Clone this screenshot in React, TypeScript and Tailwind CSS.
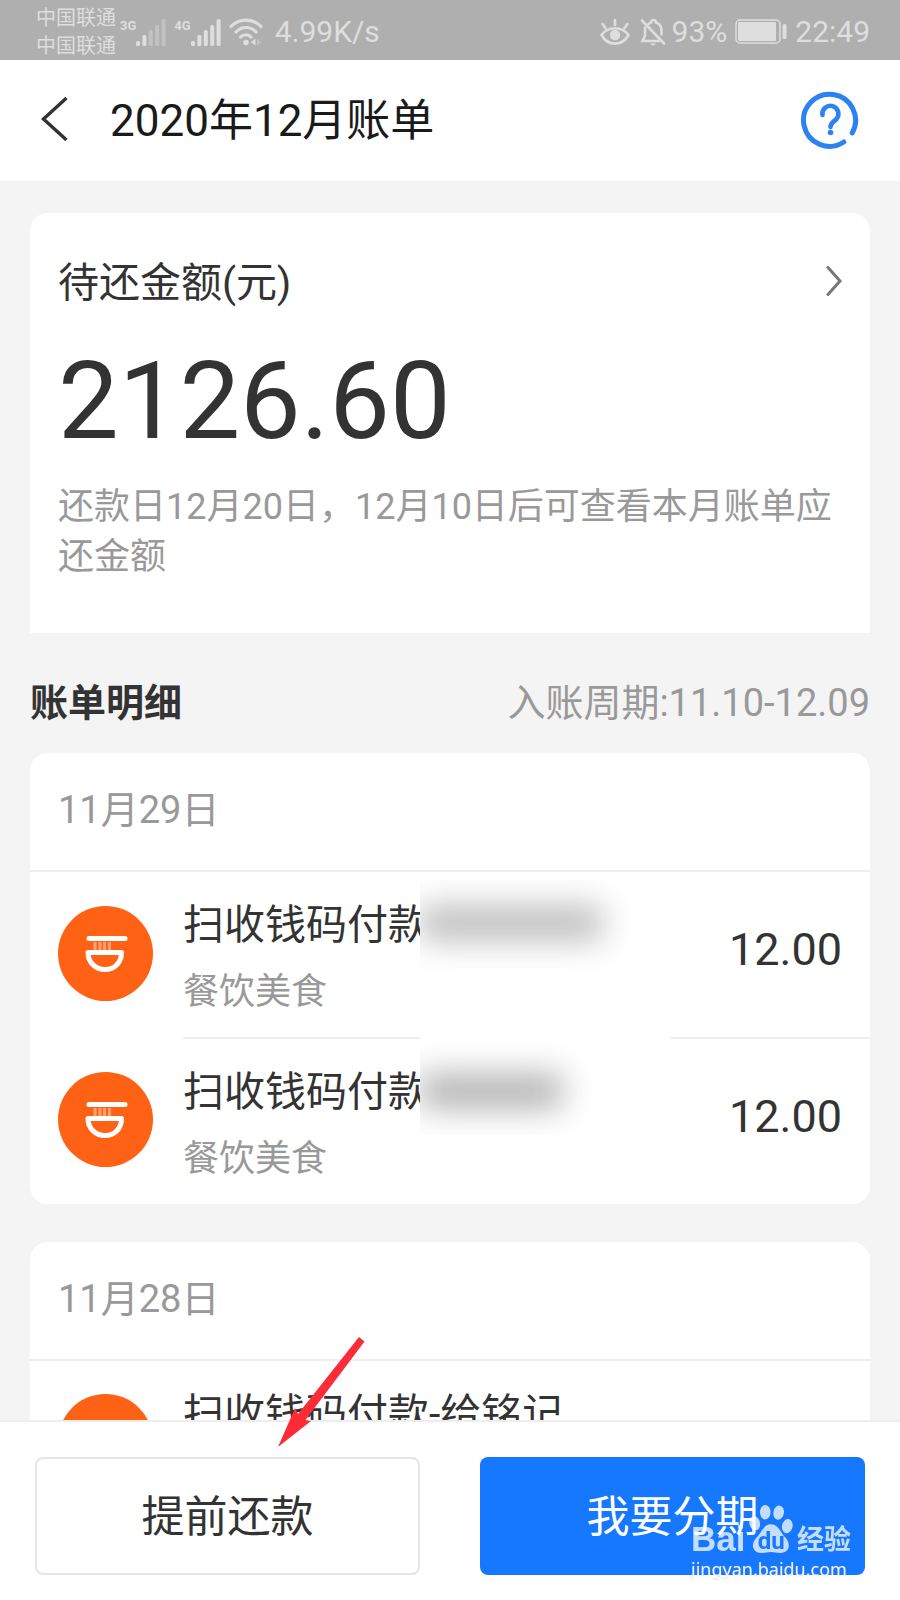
import type { ReactNode } from "react";

type Transaction = {
  title: string;
  category: string;
  amount: string;
};

type Day = {
  date: string;
  masked?: boolean;
  items: Transaction[];
};

const days: Day[] = [
  {
    date: "11月29日",
    masked: true,
    items: [
      { title: "扫收钱码付款", category: "餐饮美食", amount: "12.00" },
      { title: "扫收钱码付款", category: "餐饮美食", amount: "12.00" },
    ],
  },
  {
    date: "11月28日",
    items: [{ title: "扫收钱码付款-给铭记", category: "餐饮美食", amount: "12.00" }],
  },
];

function Signal({ label, strength }: { label: string; strength: number }) {
  const heights = [5, 11, 16, 21, 27];
  return (
    <div className="flex items-start">
      <span className="text-[13px] leading-4 font-bold">{label}</span>
      <svg width="30" height="28" viewBox="0 0 30 28" fill="currentColor">
        {heights.map((h, i) => (
          <rect
            key={h}
            x={i * 6.4}
            y={28 - h}
            width="4"
            height={h}
            rx="1.5"
            opacity={i < strength ? 1 : 0.4}
          />
        ))}
      </svg>
    </div>
  );
}

function StatusBar() {
  return (
    <div className="flex h-[60px] shrink-0 items-center justify-between bg-[#afafaf] pt-1 pr-[30px] pl-[36px] text-[#dedede]">
      <div className="flex items-center">
        <div className="text-[20px] leading-7">
          <p>中国联通</p>
          <p>中国联通</p>
        </div>
        <div className="ml-1 flex items-center gap-2">
          <Signal label="3G" strength={2} />
          <Signal label="4G" strength={5} />
          <svg width="34" height="28" viewBox="0 0 34 28" fill="none" stroke="currentColor" strokeWidth="3.2" strokeLinecap="round">
            <path d="M2 8.5C10 0 24 0 32 8.5" />
            <path d="M7 14C12.5 8 21.5 8 27 14" />
            <path d="M11.5 19C14.5 16 19.5 16 22 19" />
            <circle cx="17" cy="24.5" r="2.8" fill="currentColor" stroke="none" />
            <path d="M26.5 20.5v7l-4.5-3.5z" fill="currentColor" stroke="none" />
            <path d="M28 20.5v7l4.5-3.5z" fill="currentColor" stroke="none" opacity="0.4" />
          </svg>
        </div>
        <span className="ml-3 text-[30px] leading-10">4.99K/s</span>
      </div>

      <div className="flex items-center">
        <svg width="30" height="28" viewBox="0 0 30 28" fill="none" stroke="currentColor" strokeWidth="2.6" strokeLinecap="round">
          <path d="M1.5 17C8 8 22 8 28.5 17C22 28.5 8 28.5 1.5 17z" />
          <circle cx="15" cy="17" r="5.2" fill="currentColor" stroke="none" />
          <path d="M15 2v5M2.5 6l3 4M27.5 6l-3 4" />
        </svg>
        <svg className="ml-[10px]" width="26" height="28" viewBox="0 0 26 28" fill="none" stroke="currentColor" strokeWidth="2.6" strokeLinecap="round">
          <path d="M2 2.5L24 25.5" />
          <path d="M5 9.5V18l-2.500 5H19" />
          <path d="M8.5 6L11 4.5a2.500 2.500 0 0 1 5 0c4 1.500 5.500 4 5.500 8v4" />
          <path d="M10 25.5a3.200 2.500 0 0 0 6 0z" fill="currentColor" stroke="none" />
        </svg>
        <span className="ml-[6px] text-[30px] leading-10">93%</span>
        <svg className="ml-2" width="52" height="26" viewBox="0 0 52 26" fill="none">
          <rect x="1" y="1" width="44" height="23" rx="4" stroke="currentColor" strokeWidth="1.5" />
          <rect x="3" y="3" width="38" height="19" rx="1" fill="currentColor" />
          <rect x="47.5" y="5" width="4" height="15" rx="1.5" fill="currentColor" />
        </svg>
        <span className="ml-2 text-[30px] leading-10">22:49</span>
      </div>
    </div>
  );
}

function Header() {
  return (
    <header className="flex h-[121px] shrink-0 items-center bg-white px-10 pb-1">
      <button type="button" aria-label="返回">
        <svg width="30" height="46" viewBox="0 0 30 46" fill="none" stroke="#333" strokeWidth="3.4">
          <path d="M26.5 2L3.5 23l23 21" />
        </svg>
      </button>
      <h1 className="ml-10 flex-1 pt-1 text-[44px] leading-[60px] text-[#1a1a1a]">2020年12月账单</h1>
      <button type="button" aria-label="帮助">
        <svg width="60" height="60" viewBox="0 0 60 60" fill="none" stroke="#2b82f0" strokeWidth="5" strokeLinecap="round">
          <path d="M52.2 44A26 26 0 1 0 43.8 53" />
          <path d="M22.5 26A8 8 0 1 1 36.5 30C33 33.5 30.5 34 30.5 38" strokeWidth="4.6" />
          <circle cx="30.5" cy="43.5" r="2.8" fill="#2b82f0" stroke="none" />
        </svg>
      </button>
    </header>
  );
}

function Summary() {
  return (
    <section className="rounded-t-[18px] bg-white px-7 pt-[42px] pb-[51px]">
      <a href="#detail" className="flex items-center justify-between text-[41px] leading-[56px] text-[#333]">
        待还金额(元)
        <svg className="mb-1" width="16" height="30" viewBox="0 0 16 30" fill="none" stroke="#777" strokeWidth="3" strokeLinecap="round">
          <path d="M2 1.5L14 15L2 28.5" />
        </svg>
      </a>
      <p className="mt-[30px] text-[108px] leading-[120px] text-[#333]">2126.60</p>
      <p className="mt-[21px] text-[36px] leading-[50px] text-[#999]">
        还款日12月20日，12月10日后可查看本月账单应还金额
      </p>
    </section>
  );
}

function FoodIcon() {
  return (
    <svg className="mb-1 shrink-0" width="95" height="95" viewBox="0 0 95 95" fill="none" stroke="#fff" strokeLinecap="round">
      <circle cx="47.5" cy="47.5" r="47.5" fill="#ff6215" stroke="none" />
      <path d="M31 32.5H67" strokeWidth="5" />
      <path d="M37 36v8M42 36v8M46.500 36v8M51.500 36v8" strokeWidth="3" strokeLinecap="butt" opacity="0.4" />
      <path d="M30 46.5H63.5C63.5 57 56 63.5 47 63.5S30 57 30 46.5z" strokeWidth="5" strokeLinejoin="round" />
    </svg>
  );
}

function Row({ item, last }: { item: Transaction; last: boolean }) {
  return (
    <li className="flex items-center pl-7">
      <FoodIcon />
      <div
        className={
          last
            ? "ml-[30px] flex flex-1 items-center justify-between pt-[25px] pr-7 pb-[21px]"
            : "ml-[30px] flex flex-1 items-center justify-between border-b-2 border-[#eee] pt-[25px] pr-7 pb-[21px]"
        }
      >
        <div>
          <p className="text-[41px] leading-[56px] whitespace-nowrap text-[#333]">{item.title}</p>
          <p className="mt-[15px] text-[36px] leading-[48px] text-[#999]">{item.category}</p>
        </div>
        <span className="pb-[14px] text-[45px] leading-[56px] text-[#333]">{item.amount}</span>
      </div>
    </li>
  );
}

function PayeeMask() {
  return (
    <div className="absolute top-[127px] left-[390px] h-[255px] w-[250px] overflow-hidden bg-white">
      <div className="absolute top-[26px] left-0 h-[34px] w-[182px] bg-[#bbb] blur-[16px]" />
      <div className="absolute top-[194px] left-0 h-[34px] w-[142px] bg-[#b0b0b0] blur-[16px]" />
    </div>
  );
}

function DayCard({ day }: { day: Day }) {
  return (
    <section className="relative rounded-[18px] bg-white">
      <h3 className="border-b-2 border-[#eee] px-7 pt-[29px] pb-8 text-[38px] leading-[56px] text-[#999]">{day.date}</h3>
      <ul>
        {day.items.map((item, i) => (
          <Row key={i} item={item} last={i === day.items.length - 1} />
        ))}
      </ul>
      {day.masked && <PayeeMask />}
    </section>
  );
}

function ActionButton({ primary, children }: { primary?: boolean; children: ReactNode }) {
  return (
    <button
      type="button"
      className={
        primary
          ? "h-[118px] rounded-lg bg-[#1677ff] pt-[2px] text-[43px] leading-[60px] text-white"
          : "h-[118px] rounded-lg border-2 border-[#e5e5e5] bg-white pt-[2px] text-[43px] leading-[60px] text-[#333]"
      }
    >
      {children}
    </button>
  );
}

function Watermark() {
  return (
    <div className="pointer-events-none absolute right-[49px] bottom-[17px] w-[160px] text-white">
      <div className="flex items-end justify-between opacity-75">
        <span className="font-['Liberation_Sans'] text-[35px] leading-[32px] font-bold">Bai</span>
        <div className="relative h-[52px] w-[46px]">
          <svg width="46" height="52" viewBox="0 0 48 52" fill="currentColor">
            <ellipse cx="7" cy="20" rx="5.5" ry="7.5" transform="rotate(-12 7 20)" />
            <ellipse cx="18" cy="8.5" rx="5.5" ry="7.5" />
            <ellipse cx="32" cy="9" rx="5.5" ry="7.5" transform="rotate(10 32 9)" />
            <ellipse cx="41" cy="23" rx="5.5" ry="7.5" transform="rotate(12 41 23)" />
            <path d="M24 21C32 21 34 30 39 35C46 43 42 51 34 51C30 51 27 50 24 50S17 51 14 51C5 51 2 42 9 35C15 29 16 21 24 21z" />
          </svg>
          <span className="absolute inset-x-0 bottom-0 text-center text-[24px] leading-7 font-bold text-[#1677ff]">du</span>
        </div>
        <span className="text-[27px] leading-[30px] font-bold">经验</span>
      </div>
      <p className="font-['Noto_Sans'] text-[18px] leading-7 opacity-90 [text-shadow:0_0_1px_#999]">jingyan.baidu.com</p>
    </div>
  );
}

function Arrow() {
  return (
    <svg className="pointer-events-none absolute bottom-[150px] left-[270px]" width="100" height="120" viewBox="0 0 100 120" fill="#fb2c36">
      <path d="M89 7L94.500 11.500L35.500 90L41 91L8 117L25 78L28 84z" />
    </svg>
  );
}

export default function App() {
  return (
    <div className="flex h-screen flex-col bg-[#f4f4f4] font-[Roboto,'Noto_Sans_CJK_SC',sans-serif]">
      <StatusBar />
      <Header />
      <main className="min-h-0 flex-1 overflow-hidden px-[30px] pt-8">
        <Summary />
        <div className="flex items-center justify-between pt-[42px] pb-[22px] text-[38px] leading-[56px]">
          <h2 className="font-bold text-[#333]">账单明细</h2>
          <span className="text-[#999]">入账周期:11.10-12.09</span>
        </div>
        <div className="flex flex-col gap-[38px]">
          {days.map((day) => (
            <DayCard key={day.date} day={day} />
          ))}
        </div>
      </main>
      <footer className="relative grid shrink-0 grid-cols-2 gap-[60px] border-t-2 border-[#eee] bg-white px-[35px] pt-[35px] pb-[25px]">
        <ActionButton>提前还款</ActionButton>
        <ActionButton primary>我要分期</ActionButton>
        <Arrow />
        <Watermark />
      </footer>
    </div>
  );
}
